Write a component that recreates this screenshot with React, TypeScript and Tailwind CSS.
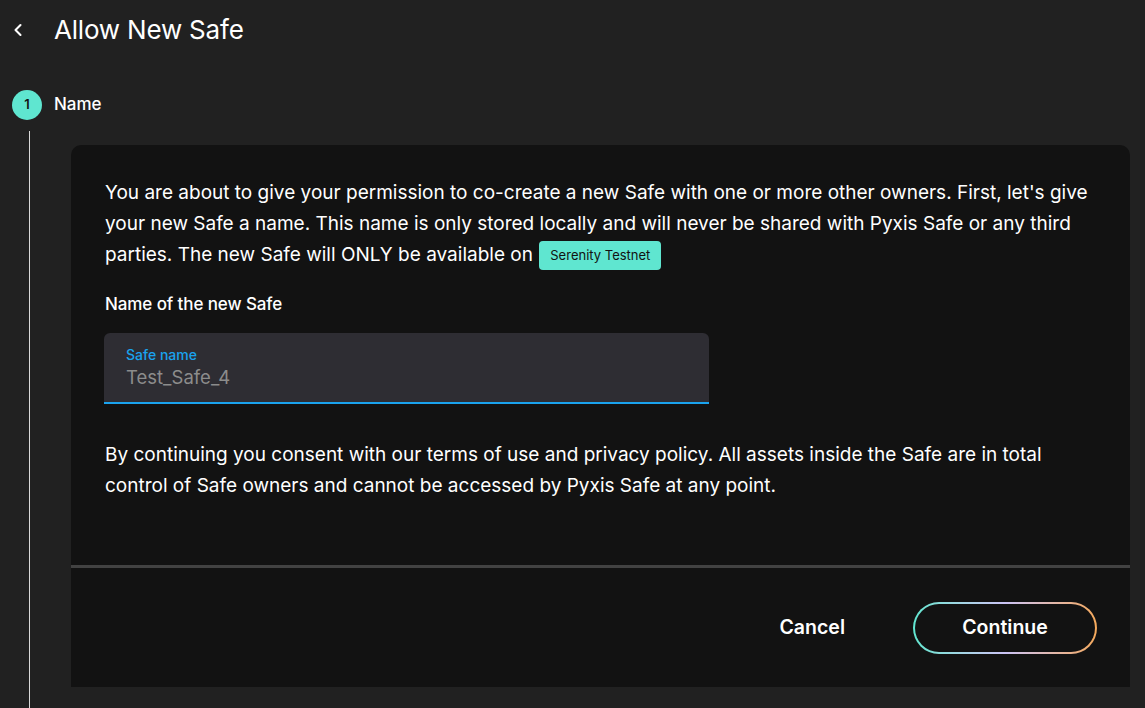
import { ChevronLeft } from "lucide-react";

const font = { fontFamily: "Inter, 'Noto Sans', sans-serif" };

export default function App() {
  return (
    <div className="min-h-screen w-full bg-[#212121] text-white" style={font}>
      {/* header */}
      <div className="flex h-[59px] items-center">
        <ChevronLeft className="ml-[8px] h-[20px] w-[20px] text-white" strokeWidth={2.5} />
        <h1 className="ml-[26px] text-[26px] font-normal tracking-[-0.2px] text-white">Allow New Safe</h1>
      </div>

      {/* step heading */}
      <div className="mt-[31px] flex items-center">
        <div className="ml-[12px] flex h-[30px] w-[30px] items-center justify-center rounded-full bg-[#5fe6d0] text-[13px] font-semibold text-[#121212]">
          1
        </div>
        <span className="ml-[12px] text-[17px] font-medium">Name</span>
      </div>

      {/* step body */}
      <div className="mt-[11px] flex">
        <div className="w-[71px] shrink-0">
          <div className="ml-[29px] h-full min-h-[577px] w-px bg-[#d9d9d9]" />
        </div>
        <div className="mr-[15px] mt-[14px] mb-[21px] flex-1 rounded-t-[10px] bg-[#121212]">
          <div className="h-[420px] px-[34px] pt-[32px]">
            <p className="text-[19px] leading-[31px] text-white">
              You are about to give your permission to co-create a new Safe with one or more other owners. First, let's give
              your new Safe a name. This name is only stored locally and will never be shared with Pyxis Safe or any third
              parties. The new Safe will ONLY be available on{" "}
              <span className="ml-[1px] inline-block rounded-[4px] bg-[#5fe6d0] px-[11px] align-[1px] text-[13px] leading-[29px] text-[#121212]">
                Serenity Testnet
              </span>
            </p>
            <div className="mt-[22px] text-[17px] font-medium tracking-[-0.1px]">Name of the new Safe</div>
            <div className="mt-[15px] flex h-[71px] w-[605px] -ml-px flex-col justify-center rounded-t-[6px] border-b-2 border-[#1aa3ee] bg-[#2e2d33] px-[22px]">
              <span className="text-[14px] leading-[17px] font-medium text-[#1aa3ee]">Safe name</span>
              <span className="mt-[3px] text-[18.5px] leading-[22px] text-[#8c8c8c]">Test_Safe_4</span>
            </div>
            <p className="mt-[35px] text-[19px] leading-[31px] text-white">
              By continuing you consent with our terms of use and privacy policy. All assets inside the Safe are in total
              control of Safe owners and cannot be accessed by Pyxis Safe at any point.
            </p>
          </div>
          <div className="h-[3px] bg-[#424242]" />
          <div className="flex h-[119px] items-center justify-end pr-[33px]">
            <button className="mr-[36px] px-[32px] text-[19.5px] font-semibold text-white">Cancel</button>
            <div className="rounded-full bg-gradient-to-r from-[#5fe6d0] via-[#cbc3f5] to-[#f5a95a] p-[2px]">
              <button className="flex h-[48px] w-[180px] items-center justify-center rounded-full bg-[#121212] text-[19.5px] font-semibold text-white">
                Continue
              </button>
            </div>
          </div>
        </div>
      </div>
    </div>
  );
}
